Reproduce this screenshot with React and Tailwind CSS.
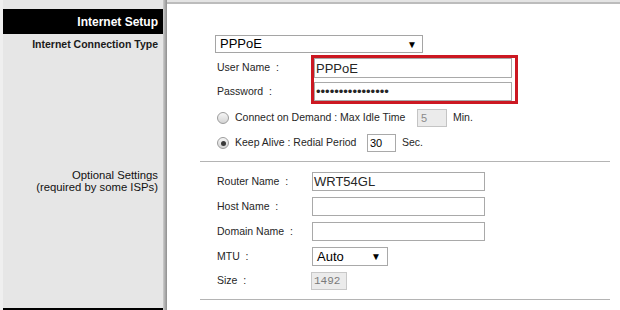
function Radio({ checked }) {
  return (
    <div className="w-[12px] h-[12px] rounded-full border border-[#9c9c9c] bg-gradient-to-b from-[#f6f6f6] to-[#d4d4d4] flex items-center justify-center shrink-0">
      {checked && <div className="w-[5px] h-[5px] rounded-full bg-[#3a3a3a]" />}
    </div>
  );
}

function Field({ w, h = "h-[19px]", children, cls = "" }) {
  return (
    <div className={`${w} ${h} border border-[#a9a9a9] bg-white flex items-center pl-[1px] text-[13px] leading-none ${cls}`}>
      {children}
    </div>
  );
}

export default function App() {
  return (
    <div className="w-[620px] h-[310px] flex bg-white overflow-hidden font-['Liberation_Sans',Arial,sans-serif] text-black">
      {/* left column */}
      <div className="w-[163px] h-full flex flex-col bg-[#e6e6e6] border-l-[3px] border-[#efefef] shrink-0">
        <div className="h-[9px]" />
        <div className="h-[25px] bg-black flex items-center justify-end pr-[5px] text-white font-bold text-[12px]">
          Internet Setup
        </div>
        <div className="mt-[4px] pr-[5px] text-right font-bold text-[10.5px] leading-[12px] text-[#1a1a1a]">
          Internet Connection Type
        </div>
        <div className="mt-[119px] pr-[5px] text-right text-[11.3px] leading-[12px] text-[#111]">
          Optional Settings
          <br />
          (required by some ISPs)
        </div>
        <div className="flex-1" />
        <div className="h-[2px] bg-black" />
      </div>
      <div className="w-[4px] h-full bg-gradient-to-r from-[#cdcdcd] to-[#8f8f8f] shrink-0" />

      {/* right column */}
      <div className="flex-1 flex flex-col">
        <div className="h-[2px] bg-[#e4e4e4]" />
        <div className="h-[2px] bg-[#bcbcbc]" />
        <div className="pl-[33px] pr-[10px] text-[10.5px] text-[#262626]">
          <div className="pl-[15px] pt-[31px]">
            {/* select */}
            <div className="w-[208px] h-[18px] border border-[#a5a5a5] flex items-center justify-between pl-[4px] pr-[5px] text-[13px] text-black">
              <span>PPPoE</span>
              <span className="text-[10px]">▼</span>
            </div>
            {/* credentials */}
            <div className="mt-[2px] flex">
              <div className="w-[96px] pl-[2px] pt-[3px] flex flex-col gap-[4px]">
                <div className="h-[20px] flex items-center">User Name&nbsp;&nbsp;:</div>
                <div className="h-[19px] flex items-center">Password&nbsp;&nbsp;:</div>
              </div>
              <div className="border-[3px] border-[#cc1822] pr-[3px] flex flex-col gap-[4px]">
                <Field w="w-[198px]" h="h-[20px]">PPPoE</Field>
                <Field w="w-[198px]" h="h-[19px]">
                  <span className="text-[13px]">••••••••••••••••</span>
                </Field>
              </div>
            </div>
            {/* radio rows */}
            <div className="mt-[5px] h-[18px] flex items-center pl-[2px]">
              <Radio />
              <span className="ml-[6px] w-[182px] shrink-0">Connect on Demand : Max Idle Time</span>
              <div className="w-[30px] h-[18px] border border-[#c4c4c4] bg-[#ebebeb] flex items-center pl-[3px] text-[11px] text-[#8a8a8a]">
                5
              </div>
              <span className="ml-[6px]">Min.</span>
            </div>
            <div className="mt-[7px] h-[18px] flex items-center pl-[2px]">
              <Radio checked />
              <span className="ml-[6px] w-[132px] shrink-0">Keep Alive : Redial Period</span>
              <div className="w-[29px] h-[18px] border border-[#a9a9a9] bg-white flex items-center pl-[2px] text-[11px] text-black">
                30
              </div>
              <span className="ml-[6px]">Sec.</span>
            </div>
          </div>
          <div className="mt-[9px] h-[1px] bg-[#b4b4b4]" />
          {/* optional */}
          <div className="pl-[15px] pt-[10px] flex flex-col gap-[6px]">
            <div className="flex items-center">
              <span className="w-[97px] pl-[2px] shrink-0">Router Name&nbsp;&nbsp;:</span>
              <Field w="w-[173px]">WRT54GL</Field>
            </div>
            <div className="flex items-center">
              <span className="w-[97px] pl-[2px] shrink-0">Host Name&nbsp;&nbsp;:</span>
              <Field w="w-[173px]" />
            </div>
            <div className="flex items-center">
              <span className="w-[97px] pl-[2px] shrink-0">Domain Name&nbsp;&nbsp;:</span>
              <Field w="w-[173px]" />
            </div>
            <div className="flex items-center">
              <span className="w-[97px] pl-[2px] shrink-0">MTU&nbsp;&nbsp;:</span>
              <div className="w-[76px] h-[19px] border border-[#a9a9a9] flex items-center justify-between pl-[4px] pr-[6px] text-[13px] text-black">
                <span>Auto</span>
                <span className="text-[10px]">▼</span>
              </div>
            </div>
            <div className="flex items-center">
              <span className="w-[96px] pl-[2px] shrink-0">Size&nbsp;&nbsp;:</span>
              <div className="w-[36px] h-[18px] border border-[#c8c8c8] bg-[#ebebeb] flex items-center pl-[2px] font-['Liberation_Mono',monospace] text-[11px] text-[#7a7a7a]">
                1492
              </div>
            </div>
          </div>
          <div className="mt-[9px] h-[1px] bg-[#b4b4b4]" />
        </div>
      </div>
    </div>
  );
}
